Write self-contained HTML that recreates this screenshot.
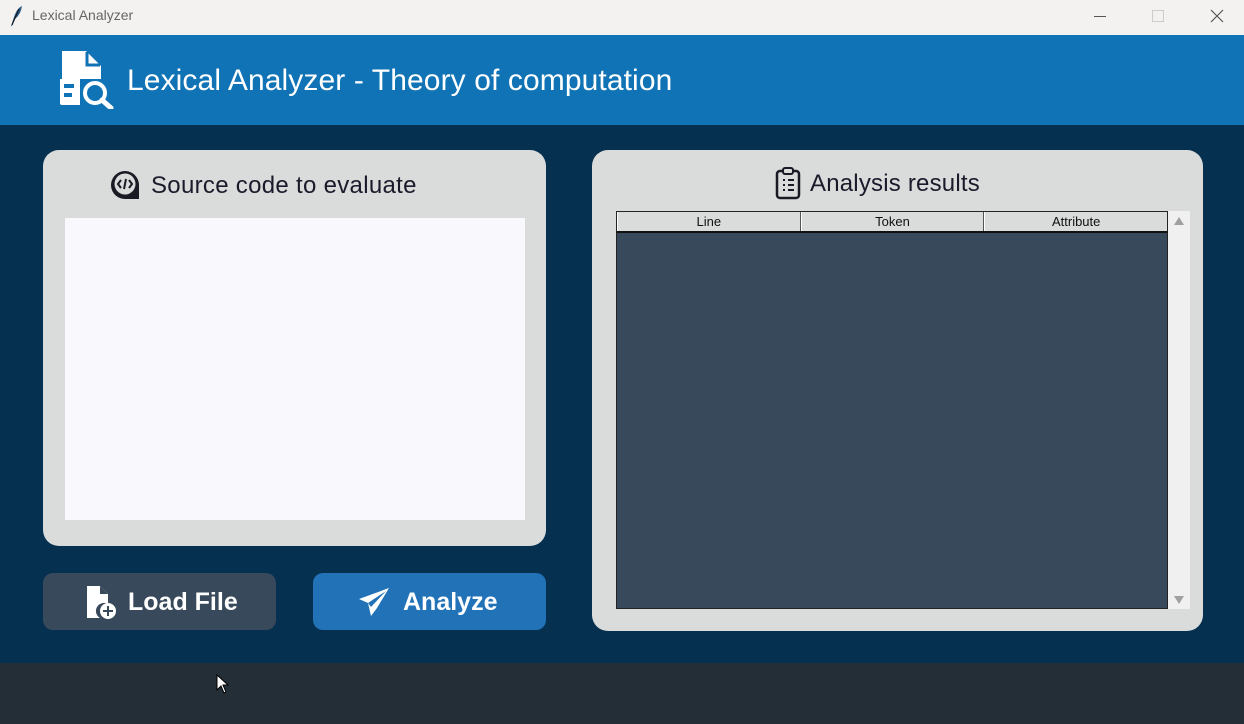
<!DOCTYPE html>
<html><head><meta charset="utf-8"><style>
*{margin:0;padding:0;box-sizing:border-box}
body{width:1244px;height:724px;overflow:hidden;font-family:"Liberation Sans",sans-serif;background:#053050;position:relative}
.abs{position:absolute}
</style></head><body>
<div class="abs" style="left:0;top:0;width:1244px;height:35px;background:#f3f2f1"></div>
<svg class="abs" style="left:9px;top:5px" width="14" height="22" viewBox="0 0 14 22"><path d="M2 21 L5 12 Q8 3 13 1 Q12 9 6 14 L3 21Z" fill="#2a5c8a"/><path d="M3 20 L10 4" stroke="#111" stroke-width="1"/></svg>
<div class="abs" style="left:32px;top:7px;font-size:14px;color:#666">Lexical Analyzer</div>
<div class="abs" style="left:1094px;top:16px;width:12px;height:1px;background:#555"></div>
<div class="abs" style="left:1152px;top:10px;width:12px;height:12px;border:1px solid #ccc"></div>
<svg class="abs" style="left:1210px;top:9px" width="14" height="14"><path d="M1 1L13 13M13 1L1 13" stroke="#555" stroke-width="1.2"/></svg>

<div class="abs" style="left:0;top:35px;width:1244px;height:90px;background:#1073b6"></div>
<svg class="abs" style="left:58px;top:49px" width="56" height="60" viewBox="0 0 56 60"><path d="M4 2 H28 L43 17 V30 H4 Z" fill="#fff"/><path d="M29 3 V16 H42" fill="none" stroke="#1073b6" stroke-width="3"/><path d="M2 30 V54 Q2 56 4 56 H22 V30 Z" fill="#fff"/><rect x="6" y="35" width="10" height="4" fill="#1073b6"/><rect x="6" y="44" width="8" height="4" fill="#1073b6"/><circle cx="37" cy="44" r="10" fill="none" stroke="#fff" stroke-width="4"/><path d="M44 51 L53 59" stroke="#fff" stroke-width="5" stroke-linecap="round"/></svg>
<div class="abs" style="left:127px;top:64px;font-size:30px;letter-spacing:0.1px;color:#fff">Lexical Analyzer - Theory of computation</div>

<div class="abs" style="left:43px;top:150px;width:503px;height:396px;background:#dadbdb;border-radius:16px"></div>
<svg class="abs" style="left:110px;top:169px" width="32" height="32" viewBox="0 0 32 32"><path d="M29 16 A14 14 0 1 0 16 30 H29 Z" fill="#1a1a24"/><circle cx="15" cy="15" r="10.5" fill="#dadbdb"/><path d="M11 11 L8 15 L11 19 M19 11 L22 15 L19 19 M16 10 L14 20" stroke="#1a1a24" stroke-width="2" fill="none"/></svg>
<div class="abs" style="left:151px;top:172px;font-size:24px;letter-spacing:0.3px;color:#1a1a2a">Source code to evaluate</div>
<div class="abs" style="left:65px;top:218px;width:460px;height:302px;background:#f8f8fd"></div>

<div class="abs" style="left:43px;top:573px;width:233px;height:57px;background:#37495a;border-radius:10px"></div>
<svg class="abs" style="left:86px;top:585px" width="34" height="36" viewBox="0 0 34 36"><path d="M1 1 H14 L22 9 V19 A8 8 0 0 0 14 33 H1 Z" fill="#fff"/><path d="M14 1 V9 H22" fill="#37495a"/><circle cx="22" cy="26" r="8" fill="#fff"/><path d="M22 21 V31 M17 26 H27" stroke="#37495a" stroke-width="2"/></svg>
<div class="abs" style="left:128px;top:588px;font-size:25px;font-weight:bold;color:#fff">Load File</div>

<div class="abs" style="left:313px;top:573px;width:233px;height:57px;background:#2272b8;border-radius:10px"></div>
<svg class="abs" style="left:358px;top:587px" width="32" height="30" viewBox="0 0 32 30"><path d="M31 1 L1 12 L10 16 L13 29 L19 21 Z" fill="#fff"/><path d="M10 16 L28 4 L13 20" fill="#2272b8"/></svg>
<div class="abs" style="left:403px;top:588px;font-size:25px;font-weight:bold;color:#fff">Analyze</div>

<div class="abs" style="left:592px;top:150px;width:611px;height:481px;background:#dadbdb;border-radius:16px"></div>
<svg class="abs" style="left:775px;top:166px" width="26" height="34" viewBox="0 0 26 34"><rect x="2" y="5" width="22" height="27" rx="3" fill="none" stroke="#1a1a24" stroke-width="2.5"/><rect x="8" y="2" width="10" height="6" rx="2" fill="#dadbdb" stroke="#1a1a24" stroke-width="2"/><path d="M8 14h2M8 19h2M8 24h2M13 14h6M13 19h6M13 24h6" stroke="#1a1a24" stroke-width="2"/></svg>
<div class="abs" style="left:810px;top:170px;font-size:24px;letter-spacing:0.2px;color:#1a1a2a">Analysis results</div>
<div class="abs" style="left:616px;top:211px;width:552px;height:398px;background:#37495a;border:1px solid #222"></div>
<div class="abs" style="left:616px;top:211px;width:552px;height:22px;display:flex;border:1px solid #222;border-bottom:2px solid #111;background:#dadbdb;font-size:13px;color:#111">
<div style="flex:1;text-align:center;border-right:1px solid #555;border-left:1px solid #fff;line-height:19px">Line</div>
<div style="flex:1;text-align:center;border-right:1px solid #555;border-left:1px solid #fff;line-height:19px">Token</div>
<div style="flex:1;text-align:center;border-left:1px solid #fff;line-height:19px">Attribute</div></div>
<div class="abs" style="left:1168px;top:211px;width:22px;height:398px;background:#f0f0f0"></div>
<div class="abs" style="left:1174px;top:217px;border-left:5px solid transparent;border-right:5px solid transparent;border-bottom:8px solid #a0a0a0"></div>
<div class="abs" style="left:1174px;top:596px;border-left:5px solid transparent;border-right:5px solid transparent;border-top:8px solid #a0a0a0"></div>

<div class="abs" style="left:0;top:663px;width:1244px;height:61px;background:#232e36"></div>
<svg class="abs" style="left:216px;top:674px" width="13" height="20" viewBox="0 0 13 20"><path d="M1 1 V16 L5 12 L8 19 L10 18 L7 11 H12 Z" fill="#fff" stroke="#000" stroke-width="1"/></svg>
</body></html>
